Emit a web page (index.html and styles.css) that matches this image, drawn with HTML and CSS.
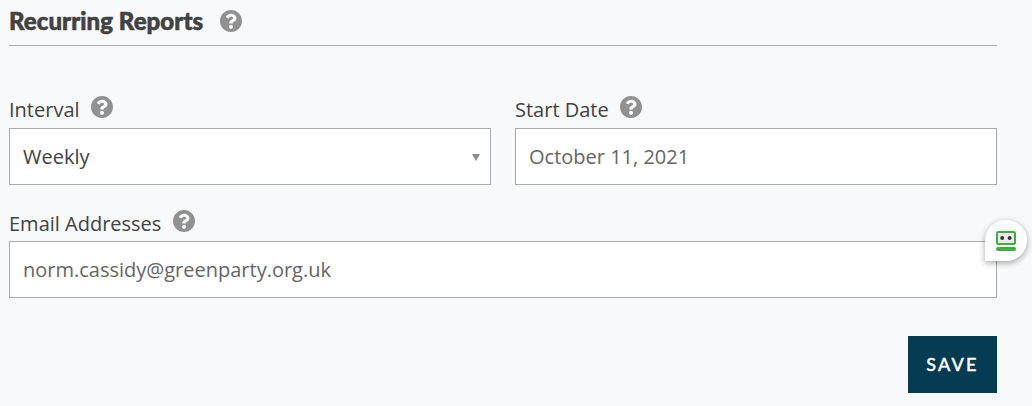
FILE: index.html
```html
<!DOCTYPE html>
<html lang="en">
<head>
    <meta charset="UTF-8">
    <meta name="viewport" content="width=device-width, initial-scale=1.0">
    <title>Recurring Reports</title>
    <link rel="stylesheet" href="styles.css">
</head>
<body>
    <svg class="sprite" aria-hidden="true">
        <symbol id="help" viewBox="8 8 496 496">
            <path d="M504 256c0 136.997-111.043 248-248 248S8 392.997 8 256C8 119.083 119.043 8 256 8s248 111.083 248 248zM262.655 90c-54.497 0-89.255 22.957-116.549 63.758-3.536 5.286-2.353 12.415 2.715 16.258l34.699 26.31c5.205 3.947 12.621 3.008 16.665-2.122 17.864-22.658 30.113-35.797 57.303-35.797 20.429 0 45.698 13.148 45.698 32.958 0 14.976-12.363 22.667-32.534 33.976C247.128 238.528 216 254.941 216 296v4c0 6.627 5.373 12 12 12h56c6.627 0 12-5.373 12-12v-1.333c0-28.462 83.186-29.647 83.186-106.667 0-58.002-60.165-102-116.531-102zM256 338c-25.365 0-46 20.635-46 46 0 25.364 20.635 46 46 46s46-20.636 46-46c0-25.365-20.635-46-46-46z"/>
        </symbol>
    </svg>

    <form class="reports">
        <div class="reports-header">
            <h2>Recurring Reports</h2>
            <svg class="help-icon"><use href="#help"/></svg>
        </div>

        <div class="row">
            <div class="field">
                <div class="field-label">
                    <label for="interval">Interval</label>
                    <svg class="help-icon"><use href="#help"/></svg>
                </div>
                <div class="select-box">
                    <select id="interval" class="control select">
                        <option>Weekly</option>
                    </select>
                    <span class="select-arrow"></span>
                </div>
            </div>
            <div class="field">
                <div class="field-label">
                    <label for="start-date">Start Date</label>
                    <svg class="help-icon"><use href="#help"/></svg>
                </div>
                <input id="start-date" class="control date" type="text" value="October 11, 2021">
            </div>
        </div>

        <div class="row">
            <div class="field">
                <div class="field-label">
                    <label for="emails">Email Addresses</label>
                    <svg class="help-icon"><use href="#help"/></svg>
                </div>
                <div class="email-box">
                    <input id="emails" class="control" type="text" value="norm.cassidy@greenparty.org.uk">
                    <div class="autofill-badge">
                        <svg width="20" height="20" viewBox="0 0 20 20">
                            <rect x="1" y="1" width="18" height="12" rx="1.5" fill="#ececf0" stroke="#3fae3f" stroke-width="2"/>
                            <circle cx="6.2" cy="7" r="2" fill="#34343c"/>
                            <circle cx="13.6" cy="7" r="2" fill="#34343c"/>
                            <rect x="0" y="16" width="20" height="4" rx="2" fill="#3fae3f"/>
                        </svg>
                    </div>
                </div>
            </div>
        </div>

        <div class="actions">
            <button type="button" class="save-button">SAVE</button>
        </div>
    </form>
</body>
</html>
```
FILE: styles.css
```css
* {
    box-sizing: border-box;
}

body {
    margin: 0;
    background: #f8f9fb;
    color: #424242;
    font-family: 'Open Sans', sans-serif;
    font-size: 20px;
    overflow: hidden;
}

.sprite {
    display: none;
}

.reports {
    width: 988px;
    margin-left: 9px;
}

.reports-header {
    display: flex;
    align-items: flex-start;
    height: 46px;
    border-bottom: 1px solid #a9abae;
}

.reports-header h2 {
    margin: 6px 0 0;
    font-family: 'Lato Black', Lato, sans-serif;
    font-size: 24px;
    font-weight: 900;
    line-height: 29px;
    letter-spacing: 0.06px;
    -webkit-text-stroke: 0.6px #424242;
}

.help-icon {
    width: 22px;
    height: 22px;
    fill: #919191;
}

.reports-header .help-icon {
    margin: 10px 0 0 17px;
}

.row {
    display: flex;
    gap: 24px;
    margin-top: 25px;
}

.reports-header + .row {
    margin-top: 50px;
}

.field {
    flex: 1;
}

.field-label {
    display: flex;
    align-items: flex-start;
    height: 32px;
}

.row + .row .field-label {
    height: 31px;
}

.field-label label {
    line-height: 28px;
}

.field-label .help-icon {
    margin: 0.4px 0 0 11.5px;
}

.control {
    display: block;
    width: 100%;
    height: 57px;
    padding: 0 13px;
    border: 1px solid #a9abae;
    border-radius: 0;
    background: #fff;
    color: #666;
    font: inherit;
    outline: none;
}

.select-box,
.email-box {
    position: relative;
}

.select {
    appearance: none;
    color: #424242;
}

.select-arrow {
    position: absolute;
    top: 26px;
    right: 11px;
    border: solid transparent;
    border-width: 7px 4px 0;
    border-top-color: #8c8c8c;
}

.autofill-badge {
    position: absolute;
    top: -21px;
    right: -30px;
    display: flex;
    align-items: center;
    justify-content: center;
    width: 42px;
    height: 41px;
    border-radius: 21px 21px 21px 0;
    background: #fff;
    box-shadow: 0 2px 6px rgba(0, 0, 0, 0.35);
}

.actions {
    display: flex;
    justify-content: flex-end;
    margin-top: 38px;
}

.save-button {
    width: 89px;
    height: 57px;
    padding: 0 0 2px;
    border: none;
    background: #053b53;
    color: #fff;
    font-family: 'Lato Medium', Lato, sans-serif;
    font-size: 18px;
    font-weight: 500;
    letter-spacing: 2.2px;
    -webkit-text-stroke: 0.4px #fff;
}
```
